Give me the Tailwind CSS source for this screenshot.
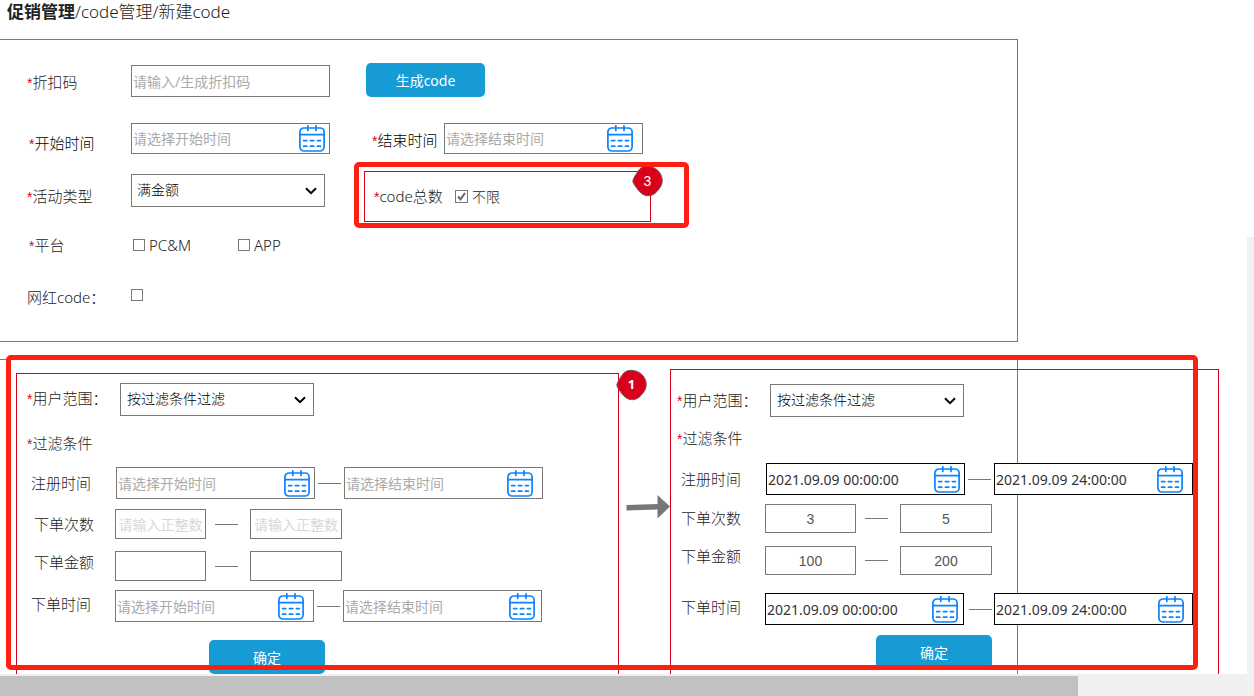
<!DOCTYPE html>
<html lang="zh-CN">
<head>
<meta charset="utf-8">
<meta name="viewport" content="width=device-width, initial-scale=1">
<title>新建code</title>
<script src="https://cdn.jsdelivr.net/npm/@tailwindcss/browser@4"></script>
</head>
<body class="flex h-screen flex-col overflow-hidden bg-white font-['Noto_Sans','Noto_Sans_CJK_SC',sans-serif] text-[15px] font-light text-[#222222]">

<!-- shared symbols -->
<svg class="hidden" aria-hidden="true">
  <symbol id="calendar" viewBox="0 0 26 27">
    <g fill="none" stroke="#0a84ff" stroke-width="1.7" stroke-linecap="round">
      <rect x="0.9" y="3" width="24.2" height="23" rx="4"/>
      <path d="M1 9.7H25M8.8 0.8V5.4M17 0.8V5.4"/>
      <path d="M4.6 15.6H7.8M11.4 15.6H14.8M18.4 15.6H21.4M4.6 21.2H7.8M11.4 21.2H14.8M18.4 21.2H21.4"/>
    </g>
  </symbol>
  <symbol id="chevron" viewBox="0 0 12 8">
    <path d="M1 1.3L6 6.2L11 1.3" fill="none" stroke="#000" stroke-width="2"/>
  </symbol>
  <symbol id="marker" viewBox="0 0 32 32">
    <path d="M0.800 16C1.500 12.500 4 9.500 6.500 5.500C8.500 2 12 0.800 16 0.800C20.500 0.800 25 3 28 6.500C30.500 10 31.200 12.500 31.200 16C31.200 19.500 29.500 22.500 26 26.500C23 30 20 31.200 16.500 31.200C12 31.200 9 28.500 6.500 25.500C4 22 1.500 19.500 0.800 16Z" fill="#d9001b" stroke="#6b5a5c" stroke-width="1"/>
  </symbol>
</svg>

<main class="relative flex min-h-0 flex-1 flex-col overflow-hidden">
  <h1 class="h-[39px] shrink-0 pl-[7px] text-[17px] leading-6"><span class="font-bold">促销管理</span>/code管理/新建code</h1>

  <!-- basic settings -->
  <section class="mr-[236px] h-[303px] shrink-0 border-y border-r border-[#797979] pt-[23px] pl-[27px]">
    <div class="flex h-[34px] items-end">
      <label for="code" class="w-[104px] leading-[30px]"><span class="font-['Liberation_Sans',sans-serif] text-[14px] leading-none text-[#d9001b]">*</span>折扣码</label>
      <input id="code" type="text" placeholder="请输入/生成折扣码" class="h-8 w-[199px] border border-[#797979] px-px text-[14px] font-normal placeholder:text-[#aaaaaa]">
      <button type="button" class="ml-9 h-[34px] w-[119px] rounded-[5px] bg-[#169bd5] text-[14px] font-normal text-white">生成code</button>
    </div>

    <div class="mt-[26px] flex h-[31px] items-end">
      <label for="start" class="w-[104px] pl-0.5 leading-[22px] text-black"><span class="font-['Liberation_Sans',sans-serif] text-[14px] leading-none text-[#d9001b]">*</span>开始时间</label>
      <div class="flex h-[31px] w-[199px] items-center border border-[#797979] pr-1">
        <input id="start" type="text" placeholder="请选择开始时间" class="min-w-0 flex-1 px-px text-[14px] font-normal placeholder:text-[#aaaaaa]">
        <svg class="h-[27px] w-[26px]"><use href="#calendar"/></svg>
      </div>
      <label for="end" class="ml-[42px] w-[72px] leading-7 text-black"><span class="font-['Liberation_Sans',sans-serif] text-[14px] leading-none text-[#d9001b]">*</span>结束时间</label>
      <div class="flex h-[31px] w-[199px] items-center border border-[#797979] pr-[9px]">
        <input id="end" type="text" placeholder="请选择结束时间" class="min-w-0 flex-1 px-px text-[14px] font-normal placeholder:text-[#aaaaaa]">
        <svg class="h-[27px] w-[26px]"><use href="#calendar"/></svg>
      </div>
    </div>

    <div class="mt-[17px] flex h-[51px] items-start">
      <label for="type" class="w-[104px] pt-[13px] leading-6"><span class="font-['Liberation_Sans',sans-serif] text-[14px] leading-none text-[#d9001b]">*</span>活动类型</label>
      <div class="mt-[3px] grid h-[33px] w-[194px] items-center">
        <select id="type" class="col-start-1 row-start-1 h-full appearance-none border border-[#797979] pb-0.5 pl-[5px] text-[14px] text-black"><option>满金额</option></select>
        <svg class="pointer-events-none col-start-1 row-start-1 mr-2 h-2 w-3 justify-self-end"><use href="#chevron"/></svg>
      </div>
      <div class="relative ml-[39px] flex h-[51px] w-[287px] items-center border border-[#d9001b] pl-[9px]">
        <span class="w-[81px]"><span class="font-['Liberation_Sans',sans-serif] text-[14px] leading-none text-[#d9001b]">*</span>code总数</span>
        <label class="flex items-center gap-1">
          <span class="grid size-[13px] place-items-center">
            <input type="checkbox" checked class="col-start-1 row-start-1 size-[13px] appearance-none border border-[#797979]">
            <svg class="pointer-events-none col-start-1 row-start-1 size-[9px]" viewBox="0 0 9 9"><path d="M1 4.500L3.500 7.300L8 1" fill="none" stroke="#666" stroke-width="2"/></svg>
          </span>
          <span class="text-[14px]">不限</span>
        </label>
        <div class="absolute -top-[7px] -right-[13px] grid h-[32px] w-[31px] place-items-center">
          <svg class="col-start-1 row-start-1 h-[32px] w-[31px]"><use href="#marker"/></svg>
          <span class="col-start-1 row-start-1 font-['Liberation_Sans',sans-serif] text-[14px] text-white">3</span>
        </div>
        <div class="pointer-events-none absolute -top-[10px] -right-[39px] -left-[11px] h-[66px] rounded-[5px] border-5 border-[#ff1f10]"></div>
      </div>
    </div>

    <div class="mt-[11px] flex h-6 items-center">
      <span class="w-[106px] pl-0.5"><span class="font-['Liberation_Sans',sans-serif] text-[14px] leading-none text-[#d9001b]">*</span>平台</span>
      <label class="flex w-[105px] items-center gap-1"><input type="checkbox" class="size-3 appearance-none border border-[#797979]">PC&amp;M</label>
      <label class="flex items-center gap-1"><input type="checkbox" class="size-3 appearance-none border border-[#797979]">APP</label>
    </div>

    <div class="mt-6 flex h-7 items-center">
      <label for="kol" class="w-[104px] pt-1">网红code：</label>
      <input id="kol" type="checkbox" class="size-3 appearance-none border border-[#797979]">
    </div>
  </section>

  <!-- user range: empty state and filled state -->
  <section class="relative mt-[17px] flex min-h-0 flex-1 pr-[28px] pl-4">
    <div class="absolute inset-y-0 right-[236px] left-0 border-t border-r border-[#797979]"></div>

    <form class="relative mt-[14px] flex min-w-[540px] flex-[1_1_603px] flex-col border-x border-t border-[#d9001b] pt-[9px] pl-[10px]">
      <div class="flex h-[33px] shrink-0 items-center">
        <label for="range-a" class="w-[93px] pb-0.5"><span class="font-['Liberation_Sans',sans-serif] text-[14px] leading-none text-[#d9001b]">*</span>用户范围：</label>
        <div class="grid h-[33px] w-[194px] items-center">
          <select id="range-a" class="col-start-1 row-start-1 h-full appearance-none border border-[#797979] pb-0.5 pl-1.5 text-[14px] text-black"><option>按过滤条件过滤</option></select>
          <svg class="pointer-events-none col-start-1 row-start-1 mr-2 h-2 w-3 justify-self-end"><use href="#chevron"/></svg>
        </div>
      </div>
      <p class="mt-[15px] h-6 shrink-0 leading-6"><span class="font-['Liberation_Sans',sans-serif] text-[14px] leading-none text-[#d9001b]">*</span>过滤条件</p>
      <div class="mt-3 flex h-8 shrink-0 items-center">
        <label for="reg-a1" class="w-[89px] pl-1">注册时间</label>
        <div class="flex h-8 w-[199px] items-center border border-[#797979] pr-1">
          <input id="reg-a1" type="text" placeholder="请选择开始时间" class="min-w-0 flex-1 px-px text-[14px] font-normal placeholder:text-[#aaaaaa]">
          <svg class="h-[27px] w-[26px]"><use href="#calendar"/></svg>
        </div>
        <div class="mx-[3px] h-px w-[23px] bg-[#797979]"></div>
        <div class="flex h-8 w-[199px] items-center border border-[#797979] pr-[9px]">
          <input type="text" aria-label="注册结束时间" placeholder="请选择结束时间" class="min-w-0 flex-1 px-px text-[14px] font-normal placeholder:text-[#aaaaaa]">
          <svg class="h-[27px] w-[26px]"><use href="#calendar"/></svg>
        </div>
      </div>
      <div class="mt-[10px] flex h-[30px] shrink-0 items-center">
        <label for="cnt-a1" class="w-[88px] pl-[7px]">下单次数</label>
        <input id="cnt-a1" type="text" placeholder="请输入正整数" class="h-[30px] w-[91px] border border-[#797979] text-center text-[14px] font-normal placeholder:text-[#d7d7d7]">
        <div class="mr-3 ml-[9px] h-px w-[23px] bg-[#797979]"></div>
        <input type="text" aria-label="最多下单次数" placeholder="请输入正整数" class="h-[30px] w-[92px] border border-[#797979] text-center text-[14px] font-normal placeholder:text-[#d7d7d7]">
      </div>
      <div class="mt-3 flex h-[30px] shrink-0 items-center">
        <label for="amt-a1" class="w-[88px] pb-2 pl-[7px]">下单金额</label>
        <input id="amt-a1" type="text" class="h-[30px] w-[91px] border border-[#797979] text-center text-[14px]">
        <div class="mr-3 ml-[9px] h-px w-[23px] bg-[#797979]"></div>
        <input type="text" aria-label="最高下单金额" class="h-[30px] w-[92px] border border-[#797979] text-center text-[14px]">
      </div>
      <div class="mt-[9px] flex h-8 shrink-0 items-center">
        <label for="time-a1" class="w-[88px] pb-1 pl-1">下单时间</label>
        <div class="flex h-8 w-[199px] items-center border border-[#797979] pr-[9px]">
          <input id="time-a1" type="text" placeholder="请选择开始时间" class="min-w-0 flex-1 px-px text-[14px] font-normal placeholder:text-[#aaaaaa]">
          <svg class="h-[27px] w-[26px]"><use href="#calendar"/></svg>
        </div>
        <div class="mx-[3px] h-px w-[23px] bg-[#797979]"></div>
        <div class="flex h-8 w-[199px] items-center border border-[#797979] pr-1.5">
          <input type="text" aria-label="下单结束时间" placeholder="请选择结束时间" class="min-w-0 flex-1 px-px text-[14px] font-normal placeholder:text-[#aaaaaa]">
          <svg class="h-[27px] w-[26px]"><use href="#calendar"/></svg>
        </div>
      </div>
      <button type="button" class="mt-[18px] ml-[182px] h-[34px] w-[116px] shrink-0 rounded-[5px] bg-[#169bd5] text-[14px] font-normal text-white">确定</button>
      <div class="absolute -top-[5px] -right-[29px] grid h-[32px] w-[31px] place-items-center">
        <svg class="col-start-1 row-start-1 h-[32px] w-[31px]"><use href="#marker"/></svg>
        <span class="col-start-1 row-start-1 text-[13px] font-bold text-white">1</span>
      </div>
    </form>

    <div class="w-[51px] shrink-0 pt-[135px] pl-[7px]">
      <svg class="h-[26px] w-[44px]" viewBox="0 0 44 26"><path d="M0.500 11L31.500 10V1L44 12.500L31.500 24.500V15.500L0.500 16.500Z" fill="#777777"/></svg>
    </div>

    <form class="relative mt-[10px] mr-[7px] flex min-w-[530px] flex-[1_1_549px] flex-col border-x border-t border-[#d9001b] pt-[14px] pl-1.5">
      <div class="flex h-[33px] shrink-0 items-center">
        <label for="range-b" class="w-[93px]"><span class="font-['Liberation_Sans',sans-serif] text-[14px] leading-none text-[#d9001b]">*</span>用户范围：</label>
        <div class="grid h-[33px] w-[194px] items-center">
          <select id="range-b" class="col-start-1 row-start-1 h-full appearance-none border border-[#797979] pb-0.5 pl-1.5 text-[14px] text-black"><option>按过滤条件过滤</option></select>
          <svg class="pointer-events-none col-start-1 row-start-1 mr-2 h-2 w-3 justify-self-end"><use href="#chevron"/></svg>
        </div>
      </div>
      <p class="mt-[9px] h-6 shrink-0 leading-6"><span class="font-['Liberation_Sans',sans-serif] text-[14px] leading-none text-[#d9001b]">*</span>过滤条件</p>
      <div class="mt-[13px] flex h-8 shrink-0 items-center">
        <label for="reg-b1" class="w-[89px] pl-1">注册时间</label>
        <div class="flex h-8 w-[199px] items-center border border-black bg-white pr-1">
          <input id="reg-b1" type="text" value="2021.09.09 00:00:00" class="min-w-0 flex-1 px-px text-[14px] font-normal text-[#333333]">
          <svg class="h-[27px] w-[26px]"><use href="#calendar"/></svg>
        </div>
        <div class="mx-[3px] h-px w-[23px] bg-[#797979]"></div>
        <div class="flex h-8 w-[199px] items-center border border-black bg-white pr-[9px]">
          <input type="text" aria-label="注册结束时间" value="2021.09.09 24:00:00" class="min-w-0 flex-1 px-px text-[14px] font-normal text-[#333333]">
          <svg class="h-[27px] w-[26px]"><use href="#calendar"/></svg>
        </div>
      </div>
      <div class="mt-[9px] flex h-[29px] shrink-0 items-center">
        <label for="cnt-b1" class="w-[88px] pl-1">下单次数</label>
        <input id="cnt-b1" type="text" value="3" class="h-[29px] w-[91px] border border-[#797979] text-center font-['Liberation_Sans',sans-serif] text-[14px] text-[#555555]">
        <div class="mr-3 ml-[9px] h-px w-[23px] bg-[#797979]"></div>
        <input type="text" aria-label="最多下单次数" value="5" class="h-[29px] w-[92px] border border-[#797979] text-center font-['Liberation_Sans',sans-serif] text-[14px] text-[#555555]">
      </div>
      <div class="mt-[13px] flex h-[29px] shrink-0 items-center">
        <label for="amt-b1" class="w-[88px] pb-2 pl-1">下单金额</label>
        <input id="amt-b1" type="text" value="100" class="h-[29px] w-[91px] border border-[#797979] text-center font-['Liberation_Sans',sans-serif] text-[14px] text-[#555555]">
        <div class="mr-3 ml-[9px] h-px w-[23px] bg-[#797979]"></div>
        <input type="text" aria-label="最高下单金额" value="200" class="h-[29px] w-[92px] border border-[#797979] text-center font-['Liberation_Sans',sans-serif] text-[14px] text-[#555555]">
      </div>
      <div class="mt-[18px] flex h-8 shrink-0 items-center">
        <label for="time-b1" class="w-[88px] pb-1 pl-1">下单时间</label>
        <div class="flex h-8 w-[199px] items-center border border-black bg-white pr-[5px]">
          <input id="time-b1" type="text" value="2021.09.09 00:00:00" class="min-w-0 flex-1 px-px text-[14px] font-normal text-[#333333]">
          <svg class="h-[27px] w-[26px]"><use href="#calendar"/></svg>
        </div>
        <div class="mr-0.5 ml-[5px] h-px w-[23px] bg-[#797979]"></div>
        <div class="flex h-8 w-[199px] items-center border border-black bg-white pr-2">
          <input type="text" aria-label="下单结束时间" value="2021.09.09 24:00:00" class="min-w-0 flex-1 px-px text-[14px] font-normal text-[#333333]">
          <svg class="h-[27px] w-[26px]"><use href="#calendar"/></svg>
        </div>
      </div>
      <button type="button" class="mt-[10px] ml-[199px] h-[34px] w-[116px] shrink-0 rounded-[5px] bg-[#169bd5] text-[14px] font-normal text-white">确定</button>
    </form>

    <!-- highlight around both forms -->
    <div class="pointer-events-none absolute -top-1 right-[56px] bottom-1 left-1.5 rounded-[5px] border-5 border-[#ff1f10]"></div>
  </section>

  <div class="absolute top-[237px] right-0 bottom-0 w-[7px] bg-[#f1f1f1]"></div>
</main>

<!-- horizontal scroll track -->
<div class="h-[22px] shrink-0 bg-[#f0f0f0] pt-0.5">
  <div class="h-5 w-[86%] bg-[#c1c1c1]"></div>
</div>
</body>
</html>
